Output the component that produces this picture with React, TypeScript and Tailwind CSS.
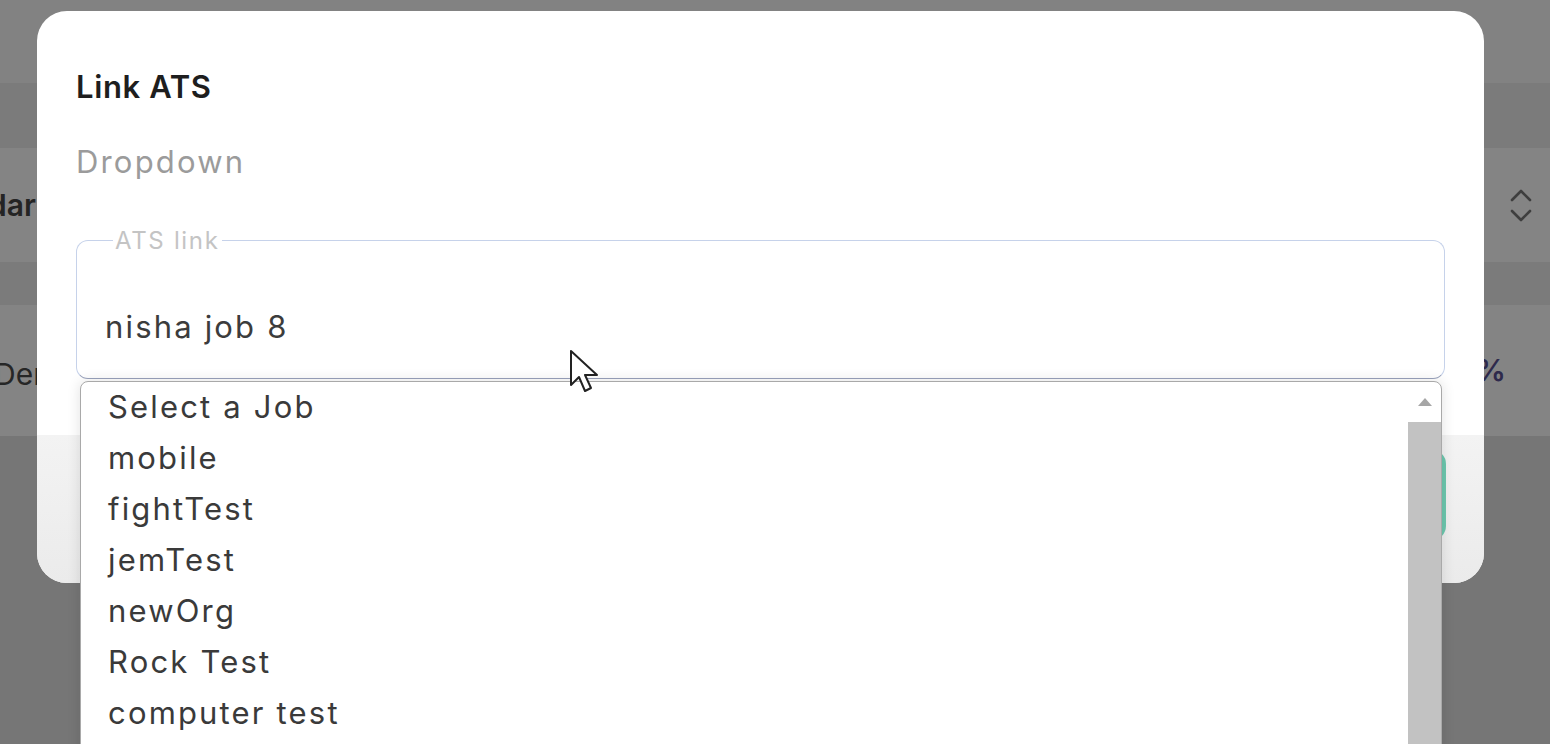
import React from "react";

const FONT = { fontFamily: "Inter, 'Noto Sans', sans-serif" };

const items = ["Select a Job", "mobile", "fightTest", "jemTest", "newOrg", "Rock Test", "computer test"];

export default function App() {
  return (
    <div className="relative w-[1550px] h-[744px] overflow-hidden bg-[#767676]" style={FONT}>
      {/* dimmed page behind */}
      <div className="flex flex-col w-full">
        <div className="h-[83px] bg-[#828282]" />
        <div className="h-[65px] bg-[#7b7b7b]" />
        <div className="h-[114px] bg-[#848484] flex items-center justify-between">
          <span className="ml-[-12px] text-[30px] font-semibold text-[#242424]">dar</span>
          <svg className="mr-[14px]" width="30" height="40" viewBox="0 0 30 40" fill="none" stroke="#3e3e3e" strokeWidth="2.6" strokeLinecap="round" strokeLinejoin="round">
            <path d="M6 15 L15 6 L24 15" />
            <path d="M6 26 L15 35 L24 26" />
          </svg>
        </div>
        <div className="h-[43px] bg-[#7b7b7b]" />
        <div className="h-[131px] bg-[#848484] flex items-center justify-end">
          <span className="mr-[44px] text-[30px] font-semibold text-[#2e2a4c]">%</span>
        </div>
        <div className="flex-1 bg-[#757575]" />
      </div>
      <span className="absolute left-[-6px] top-[352px] text-[30px] text-[#262626]">Der</span>

      {/* modal */}
      <div className="absolute left-[37px] top-[11px] w-[1447px] h-[572px] rounded-[30px] bg-white overflow-hidden flex flex-col">
        <div className="flex-1 px-[39px] pt-[56px]">
          <div className="text-[31px] font-semibold tracking-[0.02em] text-[#1e1e1e] leading-[40px]">Link ATS</div>
          <div className="mt-[35px] text-[31px] tracking-[0.07em] text-[#9b9b9b] leading-[40px]">Dropdown</div>
          <fieldset className="mt-[46px] h-[151px] rounded-[12px] border-[1.5px] border-[#c6d2ea] border-b-[#9aa3bd] px-[28px]">
            <legend className="ml-[8px] px-[2px] text-[24px] tracking-[0.07em] text-[#c4c4c4] leading-[25px]">ATS link</legend>
            <div className="mt-[54px] text-[31px] tracking-[0.07em] text-[#3c3c3c] leading-[40px]">nisha job 8</div>
          </fieldset>
        </div>
        <div className="h-[148px] bg-gradient-to-b from-[#f3f3f3] to-[#ebebeb] flex justify-end px-[38px] pt-[15px]">
          <div className="w-[200px] h-[90px] rounded-[14px] bg-[#6cc7ae]" />
        </div>
      </div>

      {/* dropdown list */}
      <div className="absolute left-[80px] top-[381px] w-[1362px] h-[420px] bg-white border border-[#a9a9a9] rounded-t-[8px] shadow-[0_0_14px_rgba(0,0,0,0.12)] flex">
        <ul className="flex-1 flex flex-col">
          {items.map((t) => (
            <li key={t} className="h-[51px] shrink-0 pl-[27px] flex items-center text-[31px] tracking-[0.07em] text-[#3a3a3a]">
              {t}
            </li>
          ))}
        </ul>
        <div className="w-[33px] flex flex-col">
          <div className="h-[40px] flex items-center justify-center">
            <svg width="14" height="8" viewBox="0 0 14 8">
              <path d="M0 8 L7 0 L14 8 Z" fill="#a6a6a6" />
            </svg>
          </div>
          <div className="flex-1 bg-[#c2c2c2]" />
        </div>
      </div>

      {/* cursor */}
      <svg className="absolute left-[569px] top-[349px]" width="34" height="48" viewBox="0 0 34 48">
        <path d="M2 2 L2 36 L10 28 L16 42 L22 39 L16 26 L28 26 Z" fill="white" stroke="#222" strokeWidth="2" strokeLinejoin="round" />
      </svg>
    </div>
  );
}
